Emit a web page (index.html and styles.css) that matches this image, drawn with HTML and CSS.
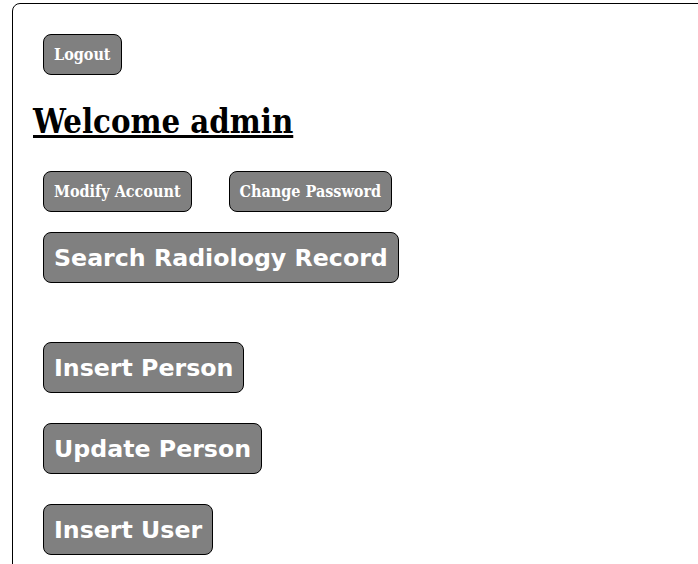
FILE: index.html
```html
<!DOCTYPE html>
<html>
<head>
<meta charset="utf-8">
<link rel="stylesheet" href="styles.css">
</head>
<body>
<div class="panel">
  <div class="row top-row">
    <button class="btn small">Logout</button>
  </div>
  <h1 class="welcome">Welcome admin</h1>
  <div class="row account-row">
    <button class="btn small">Modify Account</button>
    <button class="btn small">Change Password</button>
  </div>
  <div class="row search-row">
    <button class="btn big">Search Radiology Record</button>
  </div>
  <div class="stack">
    <button class="btn big">Insert Person</button>
    <button class="btn big">Update Person</button>
    <button class="btn big">Insert User</button>
  </div>
</div>
</body>
</html>
```
FILE: styles.css
```css
html, body {
  margin: 0;
  padding: 0;
  background: #ffffff;
  overflow: hidden;
}
.panel {
  margin: 3px 0 0 12px;
  width: 760px;
  min-height: 700px;
  border: 1px solid #000;
  border-radius: 8px;
  padding: 30px 0 0 20px;
  box-sizing: border-box;
}
.row {
  display: flex;
  align-items: flex-start;
  padding-left: 10px;
}
.account-row {
  gap: 37px;
}
.search-row {
  margin-top: 20px;
}
.welcome {
  font-family: "DejaVu Serif Condensed", "DejaVu Serif", serif;
  font-stretch: condensed;
  font-weight: bold;
  font-size: 32.6px;
  text-decoration: underline;
  margin: 27px 0 29px 0;
  line-height: 40px;
}
.btn {
  background: #808080;
  color: #fff;
  border: 1px solid #000;
  border-radius: 8px;
  font-weight: bold;
  cursor: pointer;
}
.btn.small {
  font-family: "DejaVu Serif Condensed", "DejaVu Serif", serif;
  font-stretch: condensed;
  font-size: 16px;
  line-height: 17px;
  padding: 11px 10px;
}
.btn.big {
  font-family: "DejaVu Sans", sans-serif;
  font-size: 23.7px;
  line-height: 29px;
  padding: 11px 10px 9px 10px;
}
.stack {
  display: flex;
  flex-direction: column;
  align-items: flex-start;
  gap: 30px;
  margin-top: 59px;
  padding-left: 10px;
}
```
